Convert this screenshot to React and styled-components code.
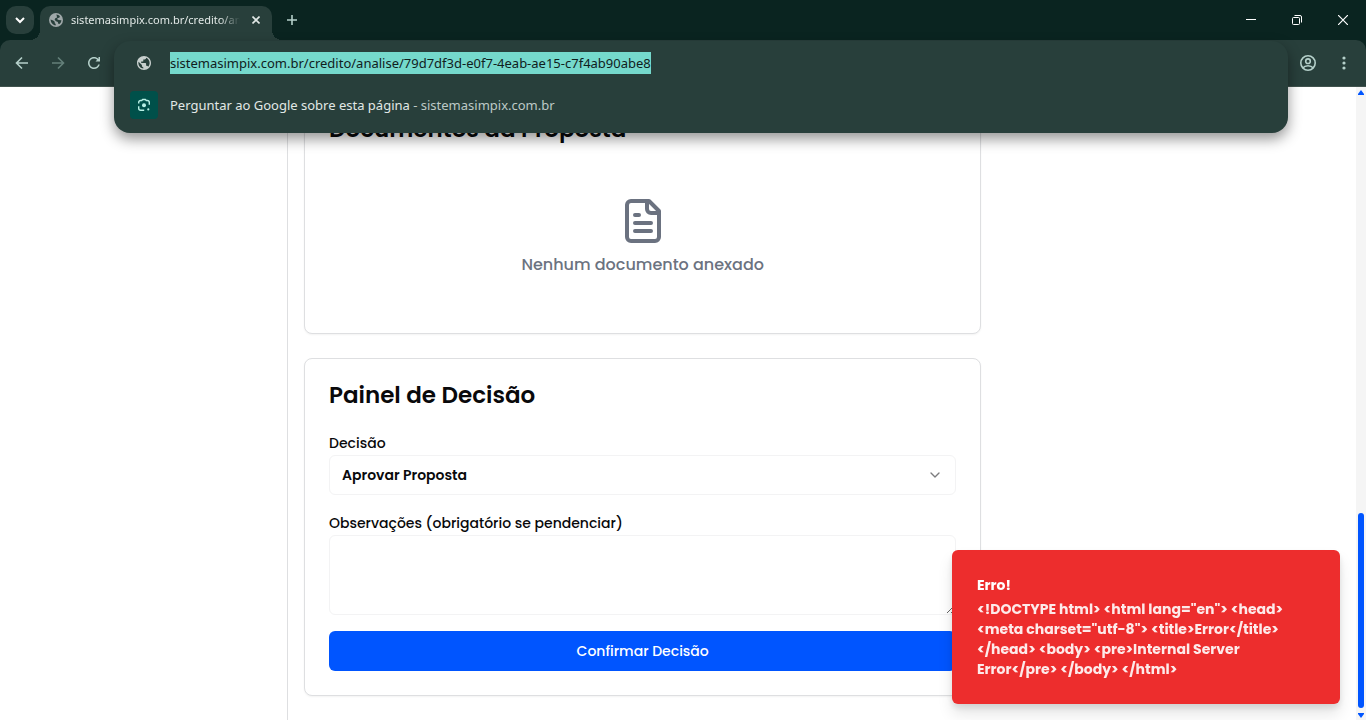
import React, { useId } from "react";
import styled, { createGlobalStyle, css } from "styled-components";

const uiFont = '"Segoe UI", "Noto Sans", "Open Sans", sans-serif';
const pageFont = 'Poppins, Inter, "Open Sans", sans-serif';

const color = {
  frame: "#0a2420",
  bar: "#283f3b",
  barText: "#e1e8e6",
  barMuted: "#bdc9c6",
  barIcon: "#b5d0ca",
  border: "#dedfe1",
  field: "#f3f3f4",
  primary: "#0055ff",
  text: "#09090b",
  muted: "#6b7280",
  danger: "#ed2d2d",
};

const GlobalStyle = createGlobalStyle`
  *, *::before, *::after { box-sizing: border-box; }
  body { margin: 0; background: #fff; }
  button, input, select, textarea { font: inherit; margin: 0; }
  button { border: 0; padding: 0; background: none; cursor: pointer; }
  h2, p { margin: 0; }
  svg { display: block; flex: none; }
`;

const Window = styled.div`
  position: relative;
  display: flex;
  flex-direction: column;
  height: 100vh;
  overflow: hidden;
  font-family: ${uiFont};
`;

const TabStrip = styled.header`
  display: flex;
  align-items: flex-end;
  height: 40px;
  flex: none;
  padding-left: 6px;
  background: ${color.frame};
  color: ${color.barText};
`;

const TabSearch = styled.button`
  display: grid;
  place-items: center;
  width: 28px;
  height: 28px;
  margin: 0 6px 6px 0;
  border-radius: 10px;
  background: ${color.bar};
  color: #fff;
`;

const Tab = styled.div`
  position: relative;
  display: flex;
  align-items: center;
  width: 232px;
  height: 34px;
  padding: 0 8px 6px 9px;
  border-radius: 10px 10px 0 0;
  background: ${color.bar};

  &::before,
  &::after {
    content: "";
    position: absolute;
    bottom: 0;
    width: 10px;
    height: 10px;
  }
  &::before {
    right: 100%;
    background: radial-gradient(circle at 0 0, transparent 10px, ${color.bar} 10px);
  }
  &::after {
    left: 100%;
    background: radial-gradient(circle at 100% 0, transparent 10px, ${color.bar} 10px);
  }
`;

const TabTitle = styled.span`
  flex: 1;
  min-width: 0;
  margin: 0 8px;
  overflow: hidden;
  white-space: nowrap;
  font-size: 11px;
  line-height: 16px;
  mask-image: linear-gradient(to right, #000 88%, transparent);
`;

const IconButton = styled.button`
  display: grid;
  place-items: center;
  width: ${(p) => p.$width || 36}px;
  height: ${(p) => p.$height || 40}px;
  color: ${(p) => p.$color || color.barIcon};
`;

const WindowControls = styled.div`
  display: flex;
  margin-left: auto;
`;

const Toolbar = styled.nav`
  display: flex;
  align-items: center;
  justify-content: space-between;
  flex: none;
  height: 47px;
  padding: 0 4px;
  border-bottom: 1px solid #41534e;
  background: ${color.bar};
`;

const ToolbarGroup = styled.div`
  display: flex;
`;

const ToolbarFrame = styled.div`
  flex: none;
  background: linear-gradient(${color.frame} 50%, ${color.bar} 50%);

  ${Toolbar} {
    border-radius: 10px 10px 0 0;
  }
`;

const Omnibox = styled.div`
  position: absolute;
  z-index: 2;
  top: 41px;
  left: 114px;
  right: 78px;
  padding: 1px 16px 7px;
  border-radius: 16px;
  background: ${color.bar};
  box-shadow: 0 6px 14px rgba(0, 0, 0, 0.42);
  color: ${color.barText};
`;

const OmniboxRow = styled.div`
  display: flex;
  align-items: center;
  gap: 12px;
  height: 42px;
`;

const RowIcon = styled.span`
  display: grid;
  place-items: center;
  width: 28px;
  height: 28px;
  border-radius: 4px;
  color: ${(p) => (p.$accent ? "#b8f0e6" : "#c7cfcd")};
  background: ${(p) => (p.$accent ? "#00504a" : "transparent")};
`;

const Address = styled.input`
  field-sizing: content;
  max-width: 100%;
  height: 22px;
  padding: 0;
  border: 0;
  outline: 0;
  background: #75d9cc;
  color: #10201d;
  font-size: 13px;
`;

const Suggestion = styled.span`
  font-size: 13px;
  small {
    font-size: 13px;
    color: ${color.barMuted};
  }
`;

const Viewport = styled.div`
  display: flex;
  flex: 1;
  min-height: 0;
  background: #fff;
  color: ${color.text};
  font-family: ${pageFont};
`;

const Sidebar = styled.aside`
  flex: none;
  width: 288px;
  border-right: 1px solid ${color.border};
`;

const Content = styled.main`
  flex: 1;
  min-width: 0;
  display: grid;
  grid-template-columns: repeat(3, minmax(0, 1fr));
  gap: 24px;
  padding: 5px 24px 24px 16px;
`;

const Column = styled.div`
  grid-column: span 2;
  display: flex;
  flex-direction: column;
  gap: 24px;
`;

const Card = styled.section`
  display: flex;
  flex-direction: column;
  gap: 24px;
  padding: 24px;
  border: 1px solid ${color.border};
  border-radius: 8px;
  background: #fff;
  box-shadow: 0 1px 2px rgba(0, 0, 0, 0.05);
`;

const CardTitle = styled.h2`
  font-size: 23px;
  line-height: 24px;
  font-weight: 600;
`;

const EmptyState = styled.div`
  display: flex;
  flex-direction: column;
  align-items: center;
  gap: 8px;
  padding: 32px 0;
  color: ${color.muted};
  font-size: 16px;
  line-height: 24px;
  font-weight: 500;
`;

const Form = styled.form`
  display: flex;
  flex-direction: column;
  gap: 16px;
  font-size: 14px;
`;

const Field = styled.div`
  display: flex;
  flex-direction: column;
`;

const Label = styled.label`
  line-height: 24px;
  font-weight: 500;
`;

const fieldBox = css`
  width: 100%;
  border: 1px solid ${color.field};
  border-radius: 6px;
  background: #fff;
  color: ${color.text};
  outline: 0;
`;

const SelectBox = styled.div`
  position: relative;
  svg {
    position: absolute;
    top: 12px;
    right: 13px;
    color: #7c7c7e;
    pointer-events: none;
  }
`;

const Select = styled.select`
  ${fieldBox}
  display: block;
  appearance: none;
  height: 40px;
  padding: 0 36px 0 12px;
  font-weight: 600;
`;

const TextArea = styled.textarea`
  ${fieldBox}
  display: block;
  height: 80px;
  padding: 8px 12px;
  resize: vertical;
`;

const SubmitButton = styled.button`
  height: 40px;
  border-radius: 6px;
  background: ${color.primary};
  color: #fff;
  font-weight: 500;
`;

const ScrollTrack = styled.div`
  display: flex;
  flex-direction: column;
  align-items: center;
  flex: none;
  width: 10px;
  padding: 3px 0 2px;
  background: #f5f5f5;
  color: ${color.primary};
`;

const ScrollSpace = styled.div`
  flex: 15;
`;

const ScrollThumb = styled.div`
  flex: 7;
  width: 6px;
  margin-bottom: 5px;
  border-radius: 3px;
  background: ${color.primary};
`;

const Toast = styled.div`
  position: fixed;
  z-index: 3;
  right: 26px;
  bottom: 16px;
  width: 388px;
  padding: 25px 49px 25px 25px;
  border-radius: 6px;
  background: ${color.danger};
  box-shadow: 0 10px 15px rgba(0, 0, 0, 0.1), 0 4px 6px rgba(0, 0, 0, 0.1);
  color: #fff;
  font-family: ${pageFont};
  font-size: 14px;
  line-height: 20px;
  font-weight: 700;
`;

const ToastTitle = styled.p`
  margin-bottom: 4px;
`;

const ToastText = styled.p`
  opacity: 0.9;
`;

const Stroke = ({ size = 16, box = 16, width = 2, round, children }) => (
  <svg
    width={size}
    height={size}
    viewBox={`0 0 ${box} ${box}`}
    fill="none"
    stroke="currentColor"
    strokeWidth={width}
    strokeLinecap={round ? "round" : "butt"}
    strokeLinejoin={round ? "round" : "miter"}
    aria-hidden="true"
  >
    {children}
  </svg>
);

const Globe = ({ size = 16 }) => (
  <svg width={size} height={size} viewBox="2 2 20 20" fill="currentColor" aria-hidden="true">
    <path d="M12 2C6.48 2 2 6.48 2 12s4.48 10 10 10 10-4.48 10-10S17.52 2 12 2zm-1 17.93c-3.95-.49-7-3.85-7-7.93 0-.62.08-1.21.21-1.79L9 15v1c0 1.1.9 2 2 2v1.93zm6.9-2.54c-.26-.81-1-1.39-1.9-1.39h-1v-3c0-.55-.45-1-1-1H8v-2h2c.55 0 1-.45 1-1V7h2c1.1 0 2-.9 2-2v-.41c2.93 1.19 5 4.06 5 7.41 0 2.08-.8 3.97-2.1 5.39z" />
  </svg>
);

const SiteIcon = () => (
  <svg width="14" height="14" viewBox="0 0 14 14" aria-hidden="true">
    <circle cx="7" cy="7" r="7" fill="#9fa8a9" />
    <path
      fill={color.bar}
      d="M7.4 1.6c1.2.1 2.5.6 3.5 1.6L10.3 4.7l-1.7.3-.4 1.3 1.5.7 2.7.2c-.1 1.5-.8 3-2 3.9L9 10.6 8.9 9 7 8.3 5.6 6.8 6.3 5.3l1.8-.8zM1.6 6.6l2.6.9 1.5 1.2.1 1.5 1 .9-.3 1.3C4 12.2 1.7 10 1.6 6.6z"
    />
  </svg>
);

const Reload = () => (
  <svg width="18" height="18" viewBox="0 0 24 24" fill="currentColor" aria-hidden="true">
    <path d="M17.65 6.35C16.2 4.9 14.21 4 12 4c-4.42 0-7.99 3.58-7.99 8s3.57 8 7.99 8c3.73 0 6.84-2.55 7.73-6h-2.08c-.82 2.33-3.04 4-5.65 4-3.31 0-6-2.69-6-6s2.69-6 6-6c1.66 0 3.14.69 4.22 1.78L14 10h6V4h-2v2.7z" />
  </svg>
);

const Lens = () => (
  <svg width="14" height="14" viewBox="0 0 14 14" fill="none" aria-hidden="true">
    <path
      d="M1.7 5.6V4.5a2 2 0 0 1 2-2h1l1-1h2.6l1 1h1a2 2 0 0 1 2 2v2.3M1.7 8.2v2a2 2 0 0 0 2 2h3.5"
      stroke="currentColor"
      strokeWidth="1.4"
    />
    <circle cx="7" cy="7.2" r="2" fill="currentColor" />
    <circle cx="11.3" cy="11.4" r="1.1" fill="currentColor" />
  </svg>
);

const Profile = () => (
  <Stroke size={18} box={18} width={1.6}>
    <circle cx="9" cy="9" r="7.2" />
    <circle cx="9" cy="7.2" r="2.3" />
    <path d="M3.8 14c1.2-1.5 3-2.2 5.2-2.2s4 .7 5.2 2.2" />
  </Stroke>
);

const ArrowTip = ({ down }) => (
  <svg width="6" height="5" viewBox="0 0 6 5" fill="currentColor" aria-hidden="true">
    <path d={down ? "M0 0h6v1L3 5 0 1z" : "M0 5h6V4L3 0 0 4z"} />
  </svg>
);

const ERROR_TEXT =
  '<!DOCTYPE html> <html lang="en"> <head> <meta charset="utf-8"> <title>Error</title> </head> <body> <pre>Internal Server Error</pre> </body> </html>';

function BrowserChrome() {
  return (
    <>
      <TabStrip>
        <TabSearch aria-label="Pesquisar guias">
          <Stroke size={10} box={10} width={2}><path d="M1 3l4 4 4-4" /></Stroke>
        </TabSearch>
        <Tab>
          <SiteIcon />
          <TabTitle>sistemasimpix.com.br/credito/analise</TabTitle>
          <IconButton $width={16} $height={16} $color="#e1e8e6" aria-label="Fechar guia">
            <Stroke size={8} box={8} width={1.6}><path d="M.5 .5l7 7M7.5 .5l-7 7" /></Stroke>
          </IconButton>
        </Tab>
        <IconButton $width={40} aria-label="Nova guia">
          <Stroke size={12} box={12} width={1.6}><path d="M6 1v10M1 6h10" /></Stroke>
        </IconButton>
        <WindowControls>
          <IconButton $width={46} $color="#fff" aria-label="Minimizar">
            <Stroke size={10} box={10} width={1}><path d="M0 4.5h10" /></Stroke>
          </IconButton>
          <IconButton $width={46} $color="#fff" aria-label="Restaurar">
            <Stroke size={10} box={10} width={1}>
              <rect x=".5" y="2.5" width="7" height="7" rx="1" />
              <path d="M2.5 .5H8A1.5 1.5 0 0 1 9.500 2v5.500" />
            </Stroke>
          </IconButton>
          <IconButton $width={46} $color="#fff" aria-label="Fechar">
            <Stroke size={10} box={10} width={1.2}><path d="M0 0l10 10M10 0L0 10" /></Stroke>
          </IconButton>
        </WindowControls>
      </TabStrip>
      <ToolbarFrame>
        <Toolbar>
          <ToolbarGroup>
            <IconButton aria-label="Voltar">
              <Stroke size={14} box={14} width={1.6}><path d="M13 7H2M7 1.5L1.5 7 7 12.5" /></Stroke>
            </IconButton>
            <IconButton $color="#64807a" aria-label="Avançar">
              <Stroke size={14} box={14} width={1.6}><path d="M1 7h11M7 1.5L12.5 7 7 12.5" /></Stroke>
            </IconButton>
            <IconButton aria-label="Recarregar"><Reload /></IconButton>
          </ToolbarGroup>
          <ToolbarGroup>
            <IconButton aria-label="Perfil"><Profile /></IconButton>
            <IconButton aria-label="Menu">
              <svg width="4" height="14" viewBox="0 0 4 14" fill="currentColor" aria-hidden="true">
                <circle cx="2" cy="2" r="1.6" />
                <circle cx="2" cy="7" r="1.6" />
                <circle cx="2" cy="12" r="1.6" />
              </svg>
            </IconButton>
          </ToolbarGroup>
        </Toolbar>
      </ToolbarFrame>
      <Omnibox>
        <OmniboxRow>
          <RowIcon><Globe size={14} /></RowIcon>
          <Address
            aria-label="Endereço"
            defaultValue="sistemasimpix.com.br/credito/analise/79d7df3d-e0f7-4eab-ae15-c7f4ab90abe8"
          />
        </OmniboxRow>
        <OmniboxRow>
          <RowIcon $accent><Lens /></RowIcon>
          <Suggestion>
            Perguntar ao Google sobre esta página <small>- sistemasimpix.com.br</small>
          </Suggestion>
        </OmniboxRow>
      </Omnibox>
    </>
  );
}

function DecisionForm() {
  const decisionId = useId();
  const notesId = useId();
  return (
    <Form onSubmit={(e) => e.preventDefault()}>
      <Field>
        <Label htmlFor={decisionId}>Decisão</Label>
        <SelectBox>
          <Select id={decisionId} defaultValue="aprovar">
            <option value="aprovar">Aprovar Proposta</option>
          </Select>
          <Stroke size={16} box={24} round><path d="m6 9 6 6 6-6" /></Stroke>
        </SelectBox>
      </Field>
      <Field>
        <Label htmlFor={notesId}>Observações (obrigatório se pendenciar)</Label>
        <TextArea id={notesId} />
      </Field>
      <SubmitButton type="submit">Confirmar Decisão</SubmitButton>
    </Form>
  );
}

export default function App() {
  return (
    <Window>
      <GlobalStyle />
      <BrowserChrome />
      <Viewport>
        <Sidebar />
        <Content>
          <Column>
            <Card>
              <CardTitle>Documentos da Proposta</CardTitle>
              <EmptyState>
                <Stroke size={48} box={24} round>
                  <path d="M15 2H6a2 2 0 0 0-2 2v16a2 2 0 0 0 2 2h12a2 2 0 0 0 2-2V7Z" />
                  <path d="M14 2v4a2 2 0 0 0 2 2h4M10 9H8M16 13H8M16 17H8" />
                </Stroke>
                <p>Nenhum documento anexado</p>
              </EmptyState>
            </Card>
            <Card>
              <CardTitle>Painel de Decisão</CardTitle>
              <DecisionForm />
            </Card>
          </Column>
        </Content>
        <ScrollTrack aria-hidden="true">
          <ArrowTip />
          <ScrollSpace />
          <ScrollThumb />
          <ArrowTip down />
        </ScrollTrack>
      </Viewport>
      <Toast role="alert">
        <ToastTitle>Erro!</ToastTitle>
        <ToastText>{ERROR_TEXT}</ToastText>
      </Toast>
    </Window>
  );
}
